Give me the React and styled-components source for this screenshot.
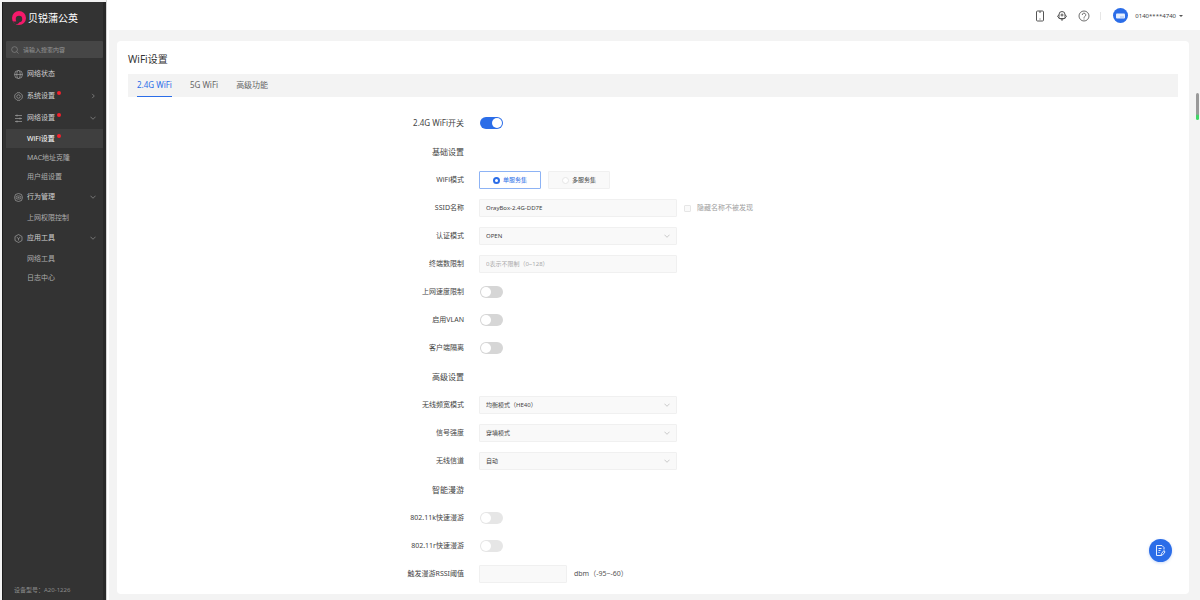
import React from "react";
import styled, { createGlobalStyle, css } from "styled-components";

const Global = createGlobalStyle`
  * { box-sizing: border-box; }
  html, body { margin: 0; background: #f3f3f3; }
  body, button, input, select {
    font-family: "Noto Sans", "Noto Sans CJK SC", sans-serif;
    font-size: 7px;
    line-height: 10px;
  }
  button { padding: 0; border: 0; background: none; cursor: pointer; }
  a { color: inherit; text-decoration: none; }
`;

const Page = styled.div`
  display: flex;
  min-height: 100vh;
`;

const Sidebar = styled.aside`
  display: flex;
  flex-direction: column;
  flex: 0 0 104px;
  min-width: 0;
  margin: 2px 0 0 2px;
  background: #333;
  border-left: 1px solid #1c1c1c;
  border-right: 3px solid #292929;
  color: #b9b9b9;
`;

const Gutter = styled.div`
  flex: 0 0 3px;
  background: #fff;
  border-left: 1px solid #d4d4d4;
`;

const Brand = styled.a`
  display: flex;
  align-items: center;
  gap: 2px;
  height: 32px;
  padding-left: 9px;
  color: #fff;
  font-size: 10px;
  line-height: 14px;
`;

const Search = styled.label`
  display: flex;
  align-items: center;
  gap: 4px;
  height: 17px;
  margin: 7px 0 5px 3px;
  padding: 0 5px;
  border-radius: 1px;
  background: #464646;
  color: #8d8d8d;

  svg { flex: none; }
  input {
    width: 100%;
    min-width: 0;
    padding: 0;
    border: 0;
    outline: 0;
    background: none;
    color: #ddd;
    font-size: 6px;
  }
  input::placeholder { color: #969696; opacity: 1; }
`;

const Nav = styled.nav`
  display: flex;
  flex-direction: column;
`;

const NavGroup = styled.a`
  display: flex;
  align-items: center;
  height: 22px;
  padding: 0 7px 0 11px;
  gap: 4px;
  color: #d0d0d0;

  svg { color: #a2a2a2; }
  & > svg:last-child:not(:first-child) { margin-left: auto; }
`;

const NavItem = styled.a`
  display: flex;
  align-items: center;
  height: 19px;
  margin-left: 3px;
  padding-left: 21px;
  color: ${(p) => (p.$active ? "#fff" : "#adadad")};
  background: ${(p) => (p.$active ? "#3f3f3f" : "transparent")};
`;

const NavText = styled.span`
  position: relative;
`;

const Dot = styled.i`
  position: absolute;
  top: 0;
  right: -6px;
  width: 4px;
  height: 4px;
  border-radius: 50%;
  background: #f5222d;
`;

const Device = styled.p`
  margin: auto 0 5px 11px;
  color: #8c8c8c;
  font-size: 6px;
`;

const Main = styled.div`
  display: flex;
  flex-direction: column;
  flex: 1;
  min-width: 0;
`;

const Header = styled.header`
  display: flex;
  align-items: center;
  justify-content: flex-end;
  gap: 10px;
  height: 30px;
  padding: 1px 17px 0 0;
  background: #fff;
  color: #555;
`;

const IconButton = styled.button`
  display: grid;
  place-items: center;
  width: 12px;
  height: 12px;
  color: inherit;
`;

const Divider = styled.span`
  width: 1px;
  height: 8px;
  margin-right: 2px;
  background: #e6e6e6;
`;

const Account = styled.button`
  display: flex;
  align-items: center;
  gap: 7px;
  color: #404040;
  font-size: 6px;
`;

const Avatar = styled.span`
  display: grid;
  place-items: center;
  width: 15px;
  height: 15px;
  border-radius: 50%;
  background: #2b6de8;
`;

const Caret = styled.span`
  border: 2px solid transparent;
  border-top-color: #555;
  border-bottom: 0;
  margin-left: -4px;
`;

const Card = styled.main`
  flex: 1;
  margin: 11px 11px 6px 8px;
  padding: 12px 11px 4px;
  border-radius: 4px;
  background: #fff;
`;

const Title = styled.h1`
  margin: 0 0 8px;
  color: #333;
  font-size: 10px;
  line-height: 13px;
  font-weight: 400;
`;

const Tabs = styled.div`
  display: flex;
  gap: 18px;
  height: 23px;
  padding: 0 9px;
  background: #f3f3f3;
`;

const Tab = styled.button`
  height: 23px;
  border-bottom: 1px solid ${(p) => (p.$active ? "#2b6de8" : "transparent")};
  color: ${(p) => (p.$active ? "#2b6de8" : "#666")};
  font-size: 8px;
`;

const Form = styled.form`
  padding-top: 12px;
`;

const Section = styled.section`
  & + & { padding-top: ${(p) => (p.$spaced ? 1 : 0)}px; }
`;

const Row = styled.div`
  display: grid;
  grid-template-columns: 32% 1fr;
  column-gap: 15px;
  align-items: center;
  height: 28px;
`;

const labelText = css`
  margin: 0;
  color: #444;
  font-size: ${(p) => (p.$large ? 8 : 7)}px;
  line-height: 10px;
  font-weight: 400;
  text-align: right;
`;
const Label = styled.label`${labelText}`;
const GroupLabel = styled.span`${labelText}`;
const SectionTitle = styled.h2`${labelText}`;

const Controls = styled.div`
  display: flex;
  align-items: center;
  gap: 7px;
`;

const Switch = styled.input`
  appearance: none;
  display: flex;
  align-items: center;
  width: 23px;
  height: 12px;
  margin: 0 0 0 1px;
  padding: 0 1px;
  border-radius: 6px;
  background: #d6d6d6;

  &::before {
    content: "";
    width: 10px;
    height: 10px;
    border-radius: 50%;
    background: #fff;
  }
  &:checked { background: #2b6de8; justify-content: flex-end; }
  &:disabled { background: #e6e6e6; }
`;

const field = css`
  width: ${(p) => (p.$short ? 88 : 198)}px;
  height: 18px;
  padding: 0 6px;
  border: 1px solid #f0f0f0;
  border-radius: 1px;
  outline: 0;
  background: #f9f9f9;
  color: #444;
  font-size: 6px;
`;

const TextInput = styled.input`
  ${field}
  &::placeholder { color: #aaa; opacity: 1; }
`;

const SelectWrap = styled.div`
  display: grid;
  align-items: center;

  & > * { grid-area: 1 / 1; }
  & > svg { justify-self: end; margin-right: 7px; color: #aaa; pointer-events: none; }
`;

const Select = styled.select`
  ${field}
  appearance: none;
`;

const Choice = styled.label`
  display: flex;
  align-items: center;
  justify-content: center;
  gap: 3px;
  width: 62px;
  height: 18px;
  border: 1px solid #f0f0f0;
  border-radius: 1px;
  background: #f9f9f9;
  color: #444;
  font-size: 6px;

  &:has(input:checked) {
    border-color: #8db3f5;
    background: #fff;
    color: #2b6de8;
  }
  input {
    appearance: none;
    width: 7px;
    height: 7px;
    margin: 0;
    border: 1px solid #e6e6e6;
    border-radius: 50%;
    background: #fff;
  }
  input:checked { border: 2px solid #2b6de8; }
`;

const Check = styled.label`
  display: flex;
  align-items: center;
  gap: 6px;
  color: #a0a0a0;

  input {
    appearance: none;
    width: 7px;
    height: 7px;
    margin: 0;
    border: 1px solid #e6e6e6;
    border-radius: 1px;
    background: #fafafa;
  }
`;

const Unit = styled.span`
  color: #555;
`;

const ScrollThumb = styled.div`
  position: fixed;
  top: 93px;
  right: 1px;
  width: 3px;
  height: 27px;
  border-radius: 2px;
  background: linear-gradient(#999 0 78%, #3fd765 84%);
`;

const Feedback = styled.button`
  position: fixed;
  right: 28px;
  bottom: 38px;
  display: grid;
  place-items: center;
  width: 23px;
  height: 23px;
  border-radius: 50%;
  background: #2b6de8;
  box-shadow: 0 1px 3px #2b6de840;
`;

const Svg = ({ size = 9, box = 18, children, ...rest }) => (
  <svg width={size} height={size} viewBox={`0 0 ${box} ${box}`} fill="none"
    stroke="currentColor" strokeWidth="1.4" aria-hidden="true" {...rest}>
    {children}
  </svg>
);

const Chevron = ({ right }) => (
  <Svg size={6} box={14}>
    <path d={right ? "M5 2l5 5-5 5" : "M1 4l6 6 6-6"} />
  </Svg>
);

const icons = {
  globe: <Svg><circle cx="9" cy="9" r="8" /><ellipse cx="9" cy="9" rx="3.5" ry="8" /><path d="M1 9h16" /></Svg>,
  system: <Svg><path d="M6 1.5h6L16.5 6v6L12 16.500H6L1.500 12V6z" /><circle cx="9" cy="9" r="3.500" /></Svg>,
  network: <Svg><path d="M2 3h14M2 9h14M2 15h14M6 1v4M12 7v4M6 13v4" /></Svg>,
  behavior: <Svg><circle cx="9" cy="9" r="8" /><rect x="4" y="6" width="10" height="6" rx="3" /><path d="M7 9h4" /></Svg>,
  tools: <Svg><path d="M9 1l7 4v8l-7 4-7-4V5z" /><path d="M5.500 6.500L9 9l3.500-2.500M9 9v4" /></Svg>,
};

const Field = ({ id, label, large, children }) => (
  <Row>
    <Label htmlFor={id} $large={large}>{label}</Label>
    <Controls>{children}</Controls>
  </Row>
);

const SwitchField = ({ id, label, large, ...rest }) => (
  <Field id={id} label={label} large={large}>
    <Switch id={id} type="checkbox" role="switch" {...rest} />
  </Field>
);

const SelectField = ({ id, label, value }) => (
  <Field id={id} label={label}>
    <SelectWrap>
      <Select id={id} defaultValue={value}><option>{value}</option></Select>
      <Chevron />
    </SelectWrap>
  </Field>
);

const Heading = ({ children }) => (
  <Row><SectionTitle $large>{children}</SectionTitle></Row>
);

const menu = [
  { icon: "globe", text: "网络状态" },
  { icon: "system", text: "系统设置", dot: true, closed: true },
  { icon: "network", text: "网络设置", dot: true, items: [
    { text: "WiFi设置", dot: true, active: true },
    { text: "MAC地址克隆" },
    { text: "用户组设置" },
  ] },
  { icon: "behavior", text: "行为管理", items: [{ text: "上网权限控制" }] },
  { icon: "tools", text: "应用工具", items: [{ text: "网络工具" }, { text: "日志中心" }] },
];

export default function App() {
  return (
    <>
      <Global />
      <Page>
        <Sidebar>
          <Brand href="#">
            <svg width="14" height="14" viewBox="0 0 26 26" aria-hidden="true">
              <circle cx="13" cy="13" r="13" fill="#f5196b" />
              <circle cx="13" cy="15" r="6" fill="#333" />
              <path fill="#333" d="M1 19c5 1 8 0 9-2l4 3c-1 3-4 5-8 4z" />
            </svg>
            贝锐蒲公英
          </Brand>
          <Search>
            <Svg size={8}><circle cx="8" cy="8" r="6.500" /><path d="M13 13l4 4" /></Svg>
            <input type="search" aria-label="搜索" placeholder="请输入搜索内容" />
          </Search>
          <Nav>
            {menu.map((g) => (
              <React.Fragment key={g.text}>
                <NavGroup href="#">
                  {icons[g.icon]}
                  <NavText>{g.text}{g.dot && <Dot />}</NavText>
                  {(g.closed || g.items) && <Chevron right={g.closed} />}
                </NavGroup>
                {g.items?.map((i) => (
                  <NavItem href="#" key={i.text} $active={i.active}>
                    <NavText>{i.text}{i.dot && <Dot />}</NavText>
                  </NavItem>
                ))}
              </React.Fragment>
            ))}
          </Nav>
          <Device>设备型号：A20-1226</Device>
        </Sidebar>
        <Gutter />
        <Main>
          <Header>
            <IconButton aria-label="手机端">
              <Svg size={12} box={24} strokeWidth="2"><rect x="5" y="2" width="14" height="20" rx="2" /><path d="M10 4h4M11 18h2" /></Svg>
            </IconButton>
            <IconButton aria-label="客服">
              <Svg size={12} box={24} strokeWidth="2"><path d="M6 17V9a6 6 0 0 1 12 0v8zM6 9l-3 4 3 3M18 9l3 4-3 3M9 17l3 4 3-4" /><path d="M12 7v6M9 10h6" /></Svg>
            </IconButton>
            <IconButton aria-label="帮助">
              <Svg size={12} box={24} strokeWidth="1.700"><circle cx="12" cy="12" r="10" /><path d="M8.500 10a3.500 3.500 0 1 1 5 3c-1 .6-1.500 1-1.500 2.500M12 17v2" /></Svg>
            </IconButton>
            <Divider />
            <Account>
              <Avatar>
                <svg width="9" height="6" viewBox="0 0 18 12" aria-hidden="true">
                  <rect y="1" width="18" height="10" rx="2" fill="#e6efff" />
                  <path d="M9 8h2M13 8h2" stroke="#2b6de8" strokeWidth="1.500" />
                </svg>
              </Avatar>
              <span>0140****4740</span>
              <Caret />
            </Account>
          </Header>
          <Card>
            <Title>WiFi设置</Title>
            <Tabs role="tablist">
              <Tab role="tab" aria-selected="true" $active>2.4G WiFi</Tab>
              <Tab role="tab" aria-selected="false">5G WiFi</Tab>
              <Tab role="tab" aria-selected="false">高级功能</Tab>
            </Tabs>
            <Form>
              <Section>
                <SwitchField id="wifi" label="2.4G WiFi开关" large defaultChecked />
              </Section>
              <Section>
                <Heading>基础设置</Heading>
                <Row role="radiogroup" aria-labelledby="mode-label">
                  <GroupLabel id="mode-label">WiFi模式</GroupLabel>
                  <Controls>
                    <Choice><input type="radio" name="mode" defaultChecked />单服务集</Choice>
                    <Choice><input type="radio" name="mode" />多服务集</Choice>
                  </Controls>
                </Row>
                <Field id="ssid" label="SSID名称">
                  <TextInput id="ssid" defaultValue="OrayBox-2.4G-DD7E" />
                  <Check><input type="checkbox" />隐藏名称不被发现</Check>
                </Field>
                <SelectField id="auth" label="认证模式" value="OPEN" />
                <Field id="limit" label="终端数限制">
                  <TextInput id="limit" placeholder="0表示不限制（0~128）" />
                </Field>
                <SwitchField id="speed" label="上网速度限制" />
                <SwitchField id="vlan" label="启用VLAN" />
                <SwitchField id="isolate" label="客户端隔离" />
              </Section>
              <Section $spaced>
                <Heading>高级设置</Heading>
                <SelectField id="width" label="无线频宽模式" value="均衡模式（HE40）" />
                <SelectField id="power" label="信号强度" value="穿墙模式" />
                <SelectField id="channel" label="无线信道" value="自动" />
              </Section>
              <Section $spaced>
                <Heading>智能漫游</Heading>
                <SwitchField id="k" label="802.11k快速漫游" disabled />
                <SwitchField id="r" label="802.11r快速漫游" disabled />
                <Field id="rssi" label="触发漫游RSSI阈值">
                  <TextInput id="rssi" $short />
                  <Unit>dbm（-95~-60）</Unit>
                </Field>
              </Section>
            </Form>
          </Card>
        </Main>
      </Page>
      <ScrollThumb />
      <Feedback aria-label="意见反馈">
        <Svg size={13} box={26} stroke="#e6efff" strokeWidth="2">
          <path d="M20 11V7l-4-4H5v20h9M9 9h6M9 13h4M9 17h2" />
          <path d="M20 13l2 3-5 6-3 1 1-4z" />
        </Svg>
      </Feedback>
    </>
  );
}
